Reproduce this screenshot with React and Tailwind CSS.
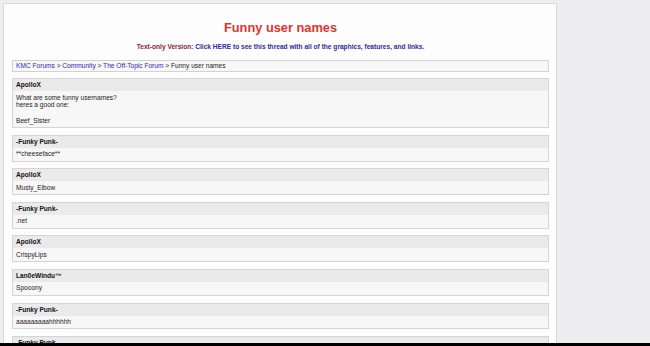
export default function App() {
  const posts = [
    { user: "ApolloX", lines: ["What are some funny usernames?", "heres a good one:", "", "Beef_Sister"] },
    { user: "-Funky Punk-", lines: ["**cheeseface**"] },
    { user: "ApolloX", lines: ["Musty_Elbow"] },
    { user: "-Funky Punk-", lines: [".net"] },
    { user: "ApolloX", lines: ["CrispyLips"] },
    { user: "Lan0eWindu™", lines: ["Spooony"] },
    { user: "-Funky Punk-", lines: ["aaaaaaaaahhhhhh"] },
    { user: "-Funky Punk-", lines: ["lol"] },
  ];
  return (
    <div className="w-[650px] h-[346px] overflow-hidden bg-[#edecee] relative font-['Liberation_Sans',Arial,sans-serif]">
      <div className="ml-[3px] mt-[3px] w-[554px] border border-[#d9d8d9] bg-[#fefdfe] pl-[8px] pr-[7px] pt-[16px] pb-[20px]">
        <div className="text-center text-[12.8px] leading-[16px] font-bold text-[#e0352c]">Funny user names</div>
        <div className="mt-[7px] text-center text-[6.6px] leading-[8px] font-bold">
          <span className="text-[#8c1d30]">Text-only Version: </span>
          <span className="text-[#2f2aa8]">Click HERE to see this thread with all of the graphics, features, and links.</span>
        </div>
        <div className="mt-[9px] h-[12px] border border-[#d3d2d3] bg-[#f9f8f9] px-[3px] text-[6.6px] leading-[10px] text-[#222]">
          <span className="text-[#2a2ab8]">KMC Forums</span> &gt; <span className="text-[#2a2ab8]">Community</span> &gt; <span className="text-[#2a2ab8]">The Off-Topic Forum</span> &gt; Funny user names
        </div>
        <div className="mt-[6px] flex flex-col gap-[6.8px]">
          {posts.map((p, i) => (
            <div key={i} className="border border-[#d6d5d6] bg-[#f8f7f8]">
              <div className="h-[12px] bg-[#ebeaeb] px-[3px] text-[6.6px] leading-[12px] font-bold text-[#111]">{p.user}</div>
              <div className="px-[3px] py-[2.5px] text-[6.6px] leading-[7.75px] text-[#222]">
                {p.lines.map((l, j) => (
                  <div key={j} className="h-[7.75px]">{l}</div>
                ))}
              </div>
            </div>
          ))}
        </div>
      </div>
      <div className="fixed left-0 bottom-0 w-[650px] h-[3px] bg-black" />
    </div>
  );
}
